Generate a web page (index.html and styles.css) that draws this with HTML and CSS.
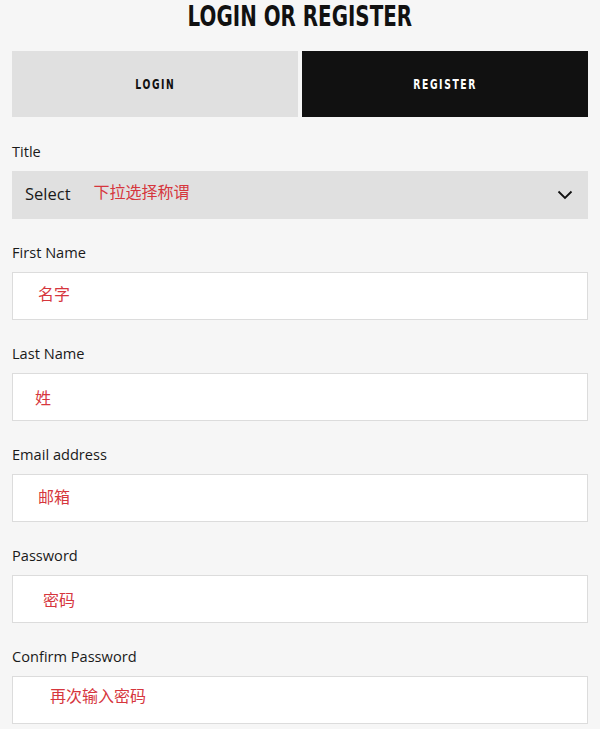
FILE: index.html
```html
<!DOCTYPE html>
<html lang="en">
<head>
<meta charset="utf-8">
<title>Login or Register</title>
<link rel="stylesheet" href="styles.css">
</head>
<body>
<main class="page">
  <h1 class="heading"><span class="squeeze">LOGIN OR REGISTER</span></h1>
  <div class="tabs">
    <div class="tab tab-login"><span class="squeeze">LOGIN</span></div>
    <div class="tab tab-register"><span class="squeeze">REGISTER</span></div>
  </div>
  <form class="form">
    <div class="field">
      <label class="label">Title</label>
      <div class="select">
        <span class="select-text">Select</span>
        <span class="note note-select">下拉选择称谓</span>
        <svg class="chevron" width="16" height="10" viewBox="0 0 16 10"><polyline points="1.5,1.5 8,8 14.5,1.5" fill="none" stroke="#111" stroke-width="1.8"/></svg>
      </div>
    </div>
    <div class="field">
      <label class="label">First Name</label>
      <div class="input"><span class="note note-first">名字</span></div>
    </div>
    <div class="field">
      <label class="label">Last Name</label>
      <div class="input"><span class="note note-last">姓</span></div>
    </div>
    <div class="field">
      <label class="label">Email address</label>
      <div class="input"><span class="note note-email">邮箱</span></div>
    </div>
    <div class="field">
      <label class="label">Password</label>
      <div class="input"><span class="note note-pass">密码</span></div>
    </div>
    <div class="field">
      <label class="label">Confirm Password</label>
      <div class="input"><span class="note note-confirm">再次输入密码</span></div>
    </div>
  </form>
</main>
</body>
</html>
```
FILE: styles.css
```css
html, body {
  margin: 0;
  padding: 0;
  background: #f6f6f6;
}
.page {
  padding: 0 12px;
  font-family: "Open Sans", "Noto Sans", sans-serif;
  color: #1a1a1a;
}
.squeeze {
  display: inline-block;
  transform-origin: center;
  white-space: nowrap;
}
.heading {
  margin: 0;
  height: 32px;
  line-height: 32px;
  text-align: center;
  font-family: "DejaVu Sans", sans-serif;
  font-weight: bold;
  font-size: 29px;
  color: #111;
}
.heading .squeeze {
  transform: scaleX(0.685);
}
.tabs {
  margin-top: 19px;
  display: grid;
  grid-template-columns: 1fr 1fr;
  gap: 4px;
}
.tab {
  height: 66px;
  display: flex;
  align-items: center;
  justify-content: center;
  font-family: "DejaVu Sans", sans-serif;
  font-weight: bold;
  font-size: 14px;
  letter-spacing: 2.4px;
}
.tab .squeeze {
  transform: scaleX(0.66);
}
.tab-login {
  background: #e0e0e0;
  color: #111;
}
.tab-register {
  background: #111;
  color: #fff;
}
.form {
  margin-top: 24px;
  display: flex;
  flex-direction: column;
  gap: 23px;
}
.field {
  display: flex;
  flex-direction: column;
  gap: 10px;
}
.label {
  font-size: 14.6px;
  line-height: 20px;
  color: #1a1a1a;
}
.select {
  height: 48px;
  background: #e0e0e0;
  display: flex;
  align-items: center;
  padding: 0 15px 0 13px;
  box-sizing: border-box;
}
.select-text {
  font-size: 16.5px;
  color: #1a1a1a;
  margin-bottom: 3px;
}
.chevron {
  margin-left: auto;
}
.note {
  font-family: "Noto Sans CJK SC", sans-serif;
  font-size: 16px;
  color: #d6363d;
  line-height: 20px;
}
.note-select {
  margin-left: 23px;
  margin-bottom: 9px;
}
.input {
  height: 48px;
  box-sizing: border-box;
  background: #fff;
  border: 1px solid #dcdcdc;
  display: flex;
  align-items: center;
}
.note-first { margin-left: 25px; margin-bottom: 6px; }
.note-last { margin-left: 22px; }
.note-email { margin-left: 25px; margin-bottom: 4px; }
.note-pass { margin-left: 30px; }
.note-confirm { margin-left: 37px; margin-bottom: 10px; }
```
